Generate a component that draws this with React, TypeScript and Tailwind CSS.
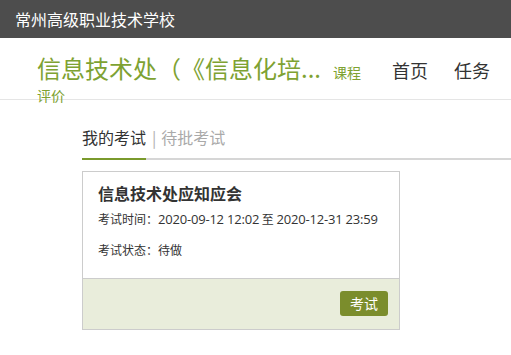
import React from "react";

const font = { fontFamily: '"Noto Sans CJK SC", "Noto Sans", sans-serif' };

function Num({ children }: { children: React.ReactNode }) {
  return (
    <span className="text-[13px] tracking-[-0.2px]" style={{ fontFamily: '"Open Sans", "Noto Sans CJK SC", sans-serif' }}>
      {children}
    </span>
  );
}

export default function App() {
  return (
    <div className="w-[511px] h-[355px] overflow-hidden bg-white [text-spacing-trim:space-all]" style={font}>
      <div className="h-[38px] bg-[#4d4d4d] flex items-center pl-[15px]">
        <span className="text-white text-[16px] leading-[16px]">常州高级职业技术学校</span>
      </div>
      <div className="h-[62px] border-b border-[#e5e5e5] px-[37px] relative">
        <div className="flex items-baseline pt-[18px] whitespace-nowrap">
          <span className="text-[24px] leading-[24px] text-[#7ea232] [text-spacing-trim:space-all]">信息技术处（《信息化培...</span>
          <span className="ml-[12px] text-[14px] leading-[14px] text-[#7ea232]">课程</span>
          <span className="ml-[31px] text-[18px] leading-[18px] text-[#333]">首页</span>
          <span className="ml-[26px] text-[18px] leading-[18px] text-[#333]">任务</span>
        </div>
        <div className="mt-[8px] text-[14px] leading-[14px] text-[#7ea232]">评价</div>
      </div>
      <div className="pl-[82px] pt-[29px]">
        <div className="flex items-end border-b-2 border-[#d6d6d6]">
          <div className="-mb-[2px] border-b-2 border-[#7a9a2c] pb-[13px] text-[16px] leading-[16px] text-[#333]">
            我的考试
          </div>
          <div className="pb-[13px] text-[16px] leading-[16px] text-[#aaa] ml-[6px]">
            <span className="text-[#b0b0b0]">|</span>
            <span className="ml-[5px]">待批考试</span>
          </div>
        </div>
        <div className="mt-[11px] w-[318px] border border-[#cccccc]">
          <div className="px-[15px] pt-[13px] pb-[22px]">
            <div className="text-[16px] leading-[16px] font-bold text-[#333]">信息技术处应知应会</div>
            <div className="mt-[12px] text-[12px] leading-[12px] text-[#333] whitespace-nowrap">
              考试时间：<Num>2020-09-12 12:02</Num> 至 <Num>2020-12-31 23:59</Num>
            </div>
            <div className="mt-[19px] text-[12px] leading-[12px] text-[#333]">考试状态：待做</div>
          </div>
          <div className="border-t border-[#cccccc] bg-[#e9eddb] flex justify-end pt-[12px] pb-[13px] pr-[11px]">
            <div className="w-[48px] h-[25px] rounded-[3px] bg-[#7b8d2c] text-white text-[14px] flex items-center justify-center">
              考试
            </div>
          </div>
        </div>
      </div>
    </div>
  );
}
